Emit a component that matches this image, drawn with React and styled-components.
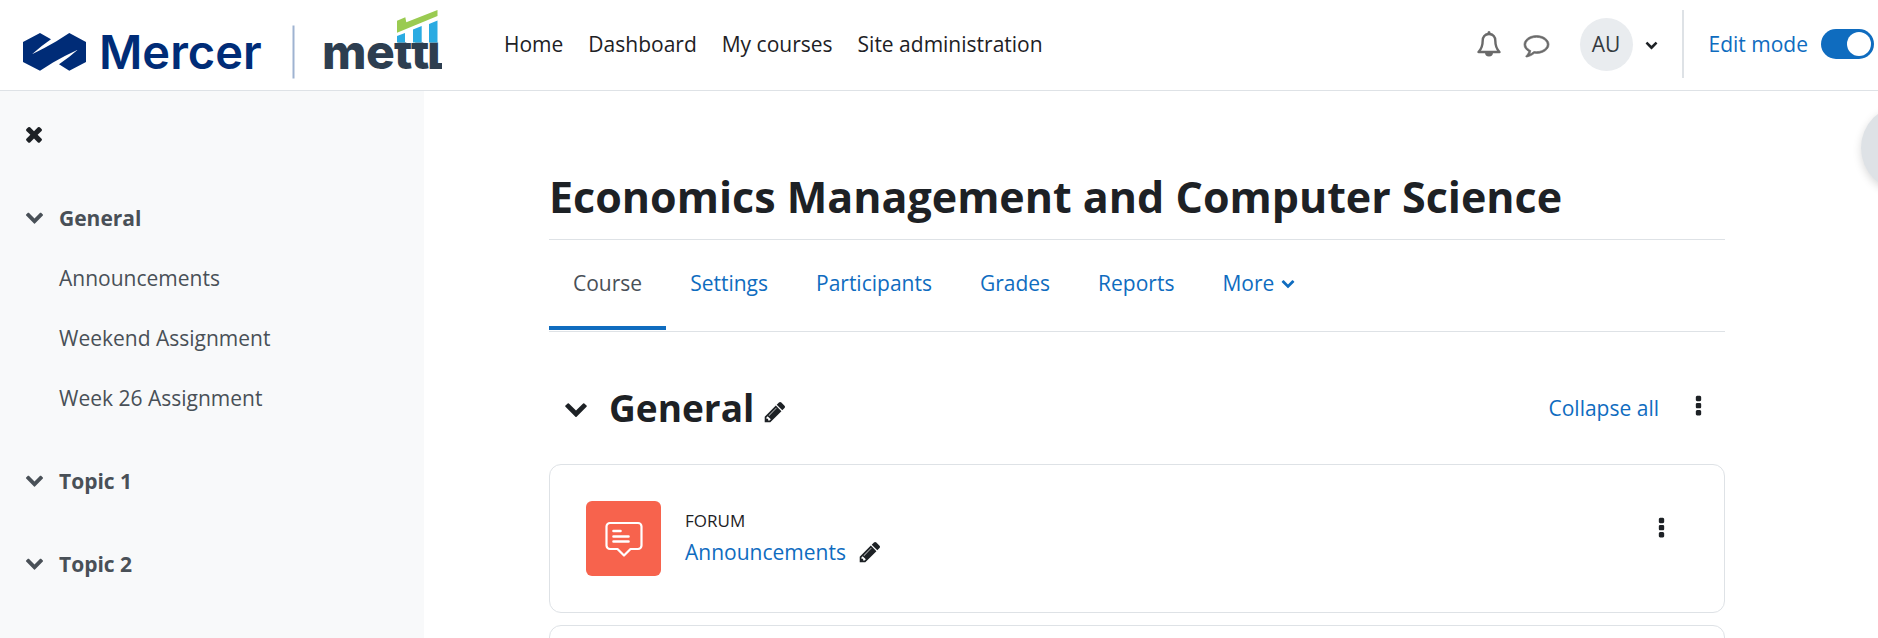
import React from "react";
import styled, { createGlobalStyle } from "styled-components";

const GlobalStyle = createGlobalStyle`
  *, *::before, *::after { box-sizing: border-box; }
  body {
    margin: 0;
    background: #fff;
    color: #1d2125;
    font-family: "Open Sans", "Noto Sans", sans-serif;
    font-size: 21px;
    line-height: 32px;
  }
  h1, h2, p, ul { margin: 0; padding: 0; }
  ul { list-style: none; }
  a { color: inherit; text-decoration: none; }
  button { margin: 0; padding: 0; border: 0; background: none; color: inherit; font: inherit; cursor: pointer; }
`;

const paths = {
  times:
    "M1490 1322q0 40-28 68l-136 136q-28 28-68 28t-68-28l-294-294-294 294q-28 28-68 28t-68-28l-136-136q-28-28-28-68t28-68l294-294-294-294q-28-28-28-68t28-68l136-136q28-28 68-28t68 28l294 294 294-294q28-28 68-28t68 28l136 136q28 28 28 68t-28 68l-294 294 294 294q28 28 28 68z",
  chevron:
    "M1683 808l-742 741q-19 19-45 19t-45-19l-742-741q-19-19-19-45.5t19-45.5l166-165q19-19 45-19t45 19l531 531 531-531q19-19 45-19t45 19l166 165q19 19 19 45.5t-19 45.5z",
  dots:
    "M1088 1248v192q0 40-28 68t-68 28h-192q-40 0-68-28t-28-68v-192q0-40 28-68t68-28h192q40 0 68 28t28 68zm0-512v192q0 40-28 68t-68 28h-192q-40 0-68-28t-28-68v-192q0-40 28-68t68-28h192q40 0 68 28t28 68zm0-512v192q0 40-28 68t-68 28h-192q-40 0-68-28t-28-68v-192q0-40 28-68t68-28h192q40 0 68 28t28 68z",
  pencil:
    "M491 1536l91-91-235-235-91 91v107h128v128h107zm523-928q0-22-22-22-10 0-17 7l-542 542q-7 7-7 17 0 22 22 22 10 0 17-7l542-542q7-7 7-17zm-54-192l416 416-832 832h-416v-416zm683 96q0 53-37 90l-166 166-416-416 166-165q36-38 90-38 53 0 91 38l235 234q37 39 37 91z",
  comment:
    "M896 384q-204 0-381.5 69.5t-282 187.5-104.5 255q0 112 71.5 213.5t201.5 175.5l87 50-27 96q-24 91-70 172 152-63 275-171l43-38 57 6q69 8 130 8 204 0 381.5-69.5t282-187.5 104.5-255-104.5-255-282-187.5-381.5-69.5zm896 512q0 174-120 321.5t-326 233-450 85.5q-70 0-145-8-198 175-460 242-49 14-114 22h-5q-15 0-27-10.5t-16-27.5v-1q-3-4-.5-12t2-10 4.5-9.5l6-9 7-8.5 8-9q7-8 31-34.5t34.5-38 31-39.5 32.5-51 27-59 26-76q-157-89-247.5-220t-90.5-281q0-130 71-248.5t191-204.5 286-136.5 348-50.5 348 50.5 286 136.5 191 204.5 71 248.5z",
};

const Svg = styled.svg`
  display: block;
  flex: none;
  fill: currentColor;
`;

const Icon = ({ name, size, outline = 0 }) => (
  <Svg width={size} height={size} viewBox="0 0 1792 1792" stroke="currentColor" strokeWidth={outline} overflow="visible" aria-hidden="true">
    <path d={paths[name]} />
  </Svg>
);

const BellIcon = () => (
  <Svg width="24" height="26" viewBox="0 0 24 26" aria-hidden="true">
    <path
      d="M12 3c-4.300 0-6.300 3-6.300 6.500 0 5.500-1.500 8.800-4.200 11.500h21c-2.700-2.700-4.200-6-4.200-11.500C18.300 6 16.300 3 12 3z"
      fill="none"
      stroke="currentColor"
      strokeWidth="2.400"
      strokeLinejoin="round"
    />
    <path d="M10.500 3V1.500a1.500 1.500 0 0 1 3 0V3zM8 21.500h8a4 4 0 0 1-8 0z" />
  </Svg>
);

const ForumIcon = () => (
  <svg width="38" height="36" viewBox="0 0 38 36" fill="none" stroke="#fff" strokeWidth="2.200" strokeLinecap="round" strokeLinejoin="round" aria-hidden="true">
    <path d="M5 2h28a3.500 3.500 0 0 1 3.500 3.500v19A3.500 3.500 0 0 1 33 28h-7.500L19 34.500 12.500 28H5a3.500 3.500 0 0 1-3.500-3.500v-19A3.500 3.500 0 0 1 5 2z" />
    <path d="M8.500 10h7M8.500 15.500h15M8.500 20.500h15" strokeWidth="2.600" />
  </svg>
);

const MercerText = styled.text`
  font-family: Inter, sans-serif;
  font-size: 47px;
  font-weight: 600;
`;
const MettlText = styled.text`
  font-family: Inter, sans-serif;
  font-size: 48px;
  font-weight: 800;
`;

const Logo = () => (
  <Svg width="443" height="90" viewBox="0 0 443 90" role="img" aria-label="Mercer mettl">
    <path
      fill="#002c77"
      d="M23 42 40 33 51 39.300Q41 46 32 54.300Q44 48.500 56 41.500L69.300 33 86 42V62L69.300 70.700 59 64.300Q69 57.500 77.700 49.700Q66 55 53 62.500L40 70.700 23 62z"
    />
    <MercerText x="99" y="69" fill="#002c77">Mercer</MercerText>
    <path fill="#9fb3d1" d="M292.500 25.500h2v53h-2z" />
    <clipPath id="mettlBase">
      <path d="M320 42.500h123V75H320z" />
    </clipPath>
    <g clipPath="url(#mettlBase)">
      <MettlText x="322 366 394 411 427" y="69" fill="#2d3e50">mettl</MettlText>
      <path fill="#2d3e50" d="M434 63h8v6h-8z" />
    </g>
    <path fill="#2aabe2" d="M397 36l8-3v9.500h-8zM413 29.500l8.700-3.500v16.500H413zM429 24l8.500-3.500v22H429z" />
    <path fill="#9acb51" d="M397 20.700l8.300-3.500 1 5L437.500 10v6L397 32.700z" />
  </Svg>
);

const Shell = styled.div`
  display: flex;
  flex-direction: column;
  height: 100vh;
  overflow: hidden;
`;

const TopBar = styled.header`
  display: flex;
  align-items: center;
  flex: none;
  height: 91px;
  padding-right: 4px;
  border-bottom: 1px solid #dee2e6;
`;

const PrimaryNav = styled.nav`
  display: flex;
  gap: 25px;
  margin-left: 61px;
  padding-bottom: 2px;
  white-space: nowrap;
`;

const UserTools = styled.div`
  display: flex;
  align-items: center;
  margin-left: auto;
  padding-bottom: 2px;
`;

const ToolButton = styled.button`
  display: flex;
  margin-right: 23px;
  color: #6a6a6a;
`;

const UserMenu = styled.button`
  display: flex;
  align-items: center;
  gap: 12px;
  margin: 0 24px 0 8px;
`;

const Avatar = styled.span`
  width: 53px;
  height: 53px;
  border-radius: 50%;
  background: #e9ecef;
  color: #343a40;
  line-height: 52px;
  text-align: center;
`;

const EditMode = styled.div`
  display: flex;
  align-items: center;
  gap: 13px;
  height: 68px;
  padding-left: 25px;
  border-left: 2px solid #dee2e6;
  color: #0f6cbf;
  white-space: nowrap;
`;

const Switch = styled.input`
  display: flex;
  align-items: center;
  justify-content: flex-end;
  appearance: none;
  width: 53px;
  height: 30px;
  margin: 0;
  padding: 3px;
  border-radius: 15px;
  background: #0f6cbf;
  &::before {
    content: "";
    width: 24px;
    height: 24px;
    border-radius: 50%;
    background: #fff;
  }
  &:not(:checked) {
    justify-content: flex-start;
    background: #8f959e;
  }
`;

const Body = styled.div`
  display: flex;
  flex: 1;
  min-height: 0;
`;

const Drawer = styled.aside`
  flex: none;
  width: 424px;
  padding: 31px 24px 0 22px;
  overflow: hidden auto;
  scrollbar-width: none;
  background: #f8f9fa;
  color: #495057;
`;

const CloseButton = styled.button`
  display: flex;
  margin-bottom: 42px;
  color: #1d2125;
`;

const IndexSection = styled.section`
  margin-bottom: 23px;
`;

const IndexTitle = styled.button`
  display: flex;
  align-items: center;
  gap: 15px;
  height: 60px;
  padding-left: 3px;
  font-weight: 700;
`;

const IndexChevron = styled.span`
  padding-bottom: 4px;
`;

const IndexItem = styled.li`
  height: 60px;
  padding-left: 37px;
  line-height: 60px;
`;

const Main = styled.main`
  flex: 1;
  padding: 78px 153px 0 125px;
  overflow: hidden auto;
  scrollbar-width: none;
`;

const CourseTitle = styled.h1`
  padding-bottom: 14px;
  font-size: 43px;
  font-weight: 700;
  line-height: 56px;
  white-space: nowrap;
`;

const TabBar = styled.nav`
  display: flex;
  height: 93px;
  border: solid #dee2e6;
  border-width: 1px 0;
`;

const Tab = styled.a`
  display: flex;
  align-items: center;
  gap: 7px;
  padding: 0 24px;
  border-bottom: 4px solid ${(p) => (p.$active ? "#0f6cbf" : "transparent")};
  margin-bottom: 1px;
  color: ${(p) => (p.$active ? "#495057" : "#0f6cbf")};
`;

const SectionHeader = styled.div`
  display: flex;
  align-items: center;
  height: 132px;
  padding: 20px 14px 0 15px;
`;

const SectionName = styled.h2`
  margin: 0 9px 0 21px;
  font-size: 37px;
  font-weight: 700;
  line-height: 48px;
`;

const IconButton = styled.button`
  display: flex;
`;

const SectionEdit = styled(IconButton)`
  padding-top: 8px;
`;

const SectionMenu = styled(IconButton)`
  padding-bottom: 4px;
`;

const CollapseAll = styled.a`
  margin: 0 27px 0 auto;
  color: #0f6cbf;
`;

const Card = styled.article`
  display: flex;
  align-items: center;
  gap: 24px;
  height: 149px;
  margin-bottom: 12px;
  padding: 0 50px 0 36px;
  border: 1px solid #dee2e6;
  border-radius: 12px;
`;

const ActivityIcon = styled.span`
  display: grid;
  place-items: center;
  width: 75px;
  height: 75px;
  border-radius: 6px;
  background: #f7634d;
`;

const ActivityText = styled.div`
  padding-bottom: 4px;
`;

const ActivityType = styled.p`
  font-size: 17px;
  line-height: 30px;
`;

const ActivityName = styled.p`
  display: flex;
  align-items: center;
  gap: 12px;
`;

const ActivityLink = styled.a`
  color: #0f6cbf;
`;

const CardMenu = styled(IconButton)`
  align-self: flex-start;
  margin: 51px 0 0 auto;
`;

const BlocksToggle = styled.button`
  position: fixed;
  top: 105px;
  right: -69px;
  width: 86px;
  height: 86px;
  border-radius: 50%;
  background: #dee2e6;
  box-shadow: 0 3px 8px rgba(0, 0, 0, 0.15);
`;

const navLinks = ["Home", "Dashboard", "My courses", "Site administration"];
const tabs = ["Course", "Settings", "Participants", "Grades", "Reports"];
const courseIndex = [
  { title: "General", items: ["Announcements", "Weekend Assignment", "Week 26 Assignment"] },
  { title: "Topic 1", items: [] },
  { title: "Topic 2", items: [] },
  { title: "Topic 3", items: [] },
];

export default function App() {
  return (
    <Shell>
      <GlobalStyle />
      <TopBar>
        <a href="#home"><Logo /></a>
        <PrimaryNav aria-label="Site">
          {navLinks.map((t) => <a key={t} href="#nav">{t}</a>)}
        </PrimaryNav>
        <UserTools>
          <ToolButton aria-label="Notifications"><BellIcon /></ToolButton>
          <ToolButton aria-label="Messages"><Icon name="comment" size={25} outline={50} /></ToolButton>
          <UserMenu aria-label="User menu">
            <Avatar>AU</Avatar>
            <Icon name="chevron" size={13} />
          </UserMenu>
          <EditMode>
            <label htmlFor="edit-mode">Edit mode</label>
            <Switch id="edit-mode" type="checkbox" defaultChecked />
          </EditMode>
        </UserTools>
      </TopBar>
      <Body>
        <Drawer aria-label="Course index">
          <CloseButton aria-label="Close course index"><Icon name="times" size={24} /></CloseButton>
          {courseIndex.map((s) => (
            <IndexSection key={s.title}>
              <IndexTitle>
                <IndexChevron><Icon name="chevron" size={19} /></IndexChevron>
                {s.title}
              </IndexTitle>
              {s.items.length > 0 && (
                <ul>
                  {s.items.map((t) => <IndexItem key={t}><a href="#item">{t}</a></IndexItem>)}
                </ul>
              )}
            </IndexSection>
          ))}
        </Drawer>
        <Main>
          <CourseTitle>Economics Management and Computer Science</CourseTitle>
          <TabBar aria-label="Course">
            {tabs.map((t, i) => <Tab key={t} href="#tab" $active={i === 0}>{t}</Tab>)}
            <Tab href="#more">More<Icon name="chevron" size={14} /></Tab>
          </TabBar>
          <SectionHeader>
            <IconButton aria-label="Collapse General"><Icon name="chevron" size={24} /></IconButton>
            <SectionName>General</SectionName>
            <SectionEdit aria-label="Edit section name"><Icon name="pencil" size={24} /></SectionEdit>
            <CollapseAll href="#collapse">Collapse all</CollapseAll>
            <SectionMenu aria-label="Section menu"><Icon name="dots" size={25} /></SectionMenu>
          </SectionHeader>
          <Card>
            <ActivityIcon><ForumIcon /></ActivityIcon>
            <ActivityText>
              <ActivityType>FORUM</ActivityType>
              <ActivityName>
                <ActivityLink href="#announcements">Announcements</ActivityLink>
                <IconButton aria-label="Edit title"><Icon name="pencil" size={24} /></IconButton>
              </ActivityName>
            </ActivityText>
            <CardMenu aria-label="Activity menu"><Icon name="dots" size={25} /></CardMenu>
          </Card>
          <Card />
        </Main>
      </Body>
      <BlocksToggle aria-label="Open block drawer" />
    </Shell>
  );
}
